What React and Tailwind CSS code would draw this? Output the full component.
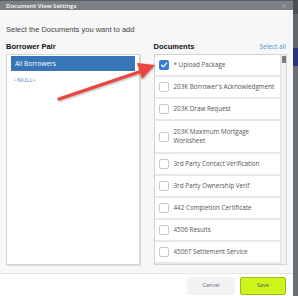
import React from 'react'

const DOCS = [
  { name: '* Upload Package', checked: true },
  { name: "203K Borrower's Acknowledgment" },
  { name: '203K Draw Request' },
  { name: '203K Maximum Mortgage Worksheet', tall: true },
  { name: '3rd Party Contact Verification' },
  { name: '3rd Party Ownership Verif' },
  { name: '442 Completion Certificate' },
  { name: '4506 Results' },
  { name: '4506T Settlement Service' },
]

function Checkbox({ checked }) {
  if (checked) {
    return (
      <div className="w-[10px] h-[10px] rounded-[2px] bg-[#3b7fd4] flex items-center justify-center flex-shrink-0">
        <svg width="8" height="8" viewBox="0 0 10 10" fill="none">
          <path d="M1.8 5.2 L4 7.4 L8.4 2.6" stroke="white" strokeWidth="1.6" strokeLinecap="round" strokeLinejoin="round" />
        </svg>
      </div>
    )
  }
  return <div className="w-[10px] h-[10px] rounded-[2px] border border-[#c9c9c9] bg-white flex-shrink-0" />
}

export default function App() {
  return (
    <div className="relative w-[298px] h-[296px] flex overflow-hidden" style={{ fontFamily: '"Open Sans", "Liberation Sans", sans-serif' }}>
      {/* Dialog */}
      <div className="w-[293px] h-full flex flex-col bg-white">
        {/* Header */}
        <div className="h-[14px] bg-[#7c8086] border-t border-[#5a5d62] flex items-center justify-between px-[6px]">
          <span className="text-[6px] font-semibold text-white leading-none">Document View Settings</span>
          <span className="text-[9px] text-[#a3a7ab] leading-none">×</span>
        </div>

        {/* Body */}
        <div className="flex-1 bg-[#f7f7f7] border-b border-[#e4e4e4] px-[6px] pt-[15px] flex flex-col">
          <p className="text-[7.5px] text-[#444] leading-[10px]" style={{ fontFamily: '"Liberation Sans", sans-serif' }}>
            Select the Documents you want to add
          </p>

          <div className="flex gap-[14px] mt-[6px] flex-1 h-0 pb-[8px]">
            {/* Borrower Pair */}
            <div className="w-[135px] flex flex-col">
              <div className="h-[12px] flex items-center text-[7.5px] font-bold text-[#111]" style={{ fontFamily: '"Liberation Sans", sans-serif' }}>
                Borrower Pair
              </div>
              <div className="mt-[1px] flex-1 bg-white border border-[#d4d4d4] shadow-[1px_1px_0_#dcdcdc] px-[4px] pt-[1px]">
                <div className="h-[15px] bg-[#3775b6] flex items-center px-[4px] text-[6.5px] text-white">All Borrowers</div>
                <div className="mt-[5px] px-[3px] text-[6px] text-[#4a86c8]">&lt;NULL&gt;</div>
              </div>
            </div>

            {/* Documents */}
            <div className="w-[135px] flex flex-col">
              <div className="h-[12px] flex items-center justify-between">
                <span className="text-[7.5px] font-bold text-[#111]" style={{ fontFamily: '"Liberation Sans", sans-serif' }}>Documents</span>
                <span className="text-[6.5px] text-[#4a8fd0] mr-[1px]">Select all</span>
              </div>
              <div className="mt-[1px] flex-1 h-0 bg-white border border-[#d4d4d4] flex overflow-hidden">
                <div className="flex-1 flex flex-col">
                  {DOCS.map(d => (
                    <div
                      key={d.name}
                      className={`flex items-center gap-[5px] pl-[4px] pr-[2px] border-b-2 border-[#e8e8e8] flex-shrink-0 ${d.tall ? 'h-[33px]' : 'h-[22px]'}`}
                    >
                      <Checkbox checked={d.checked} />
                      <span className="text-[6.3px] text-[#555] leading-[8.5px]">
                        {d.tall ? (<>203K Maximum Mortgage<br />Worksheet</>) : d.name}
                      </span>
                    </div>
                  ))}
                </div>
                {/* Scrollbar */}
                <div className="w-[6px] bg-[#f1f1f1] border-l border-[#e2e2e2] pt-[1px] flex justify-center">
                  <div className="w-[4px] h-[7px] bg-[#7e7e7e]" />
                </div>
              </div>
            </div>
          </div>
        </div>

        {/* Footer */}
        <div className="h-[34px] bg-white flex items-center justify-end gap-[5px] pr-[7px] pt-[1px]">
          <button className="w-[48px] h-[18px] bg-[#f1f2f4] rounded-[2px] text-[5.5px] text-[#666]">Cancel</button>
          <button className="w-[46px] h-[18px] bg-[#cdf51b] border border-[#9dbb1d] rounded-[2px] text-[5.5px] text-[#556]">Save</button>
        </div>
      </div>

      {/* Background beside the dialog */}
      <div className="w-[5px] h-full flex flex-col">
        <div className="h-[14px] bg-[#4b4e53]" />
        <div className="h-[34px] bg-[#64676c]" />
        <div className="h-[18px] bg-[#2a3180]" />
        <div className="flex-1 bg-[#6b6e73]" />
      </div>

      {/* Red callout arrow */}
      <svg className="absolute left-0 top-0 pointer-events-none" width="298" height="296">
        <defs>
          <filter id="sh" x="-20%" y="-20%" width="140%" height="140%">
            <feDropShadow dx="0.5" dy="1" stdDeviation="0.8" floodColor="#000" floodOpacity="0.35" />
          </filter>
        </defs>
        <g filter="url(#sh)">
          <line x1="59" y1="99" x2="142" y2="71" stroke="#e8453c" strokeWidth="3.2" strokeLinecap="round" />
          <polygon points="155,65 137,63 142,79" fill="#e8453c" />
        </g>
      </svg>
    </div>
  )
}
